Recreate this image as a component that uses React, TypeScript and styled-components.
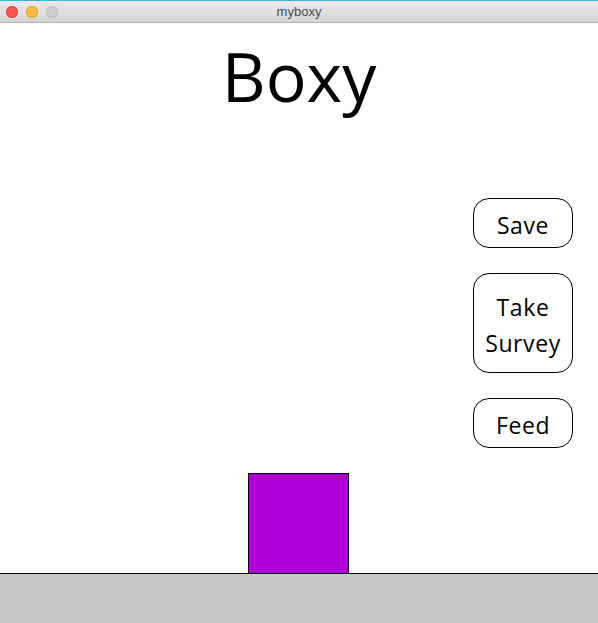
import React from 'react'
import styled, { createGlobalStyle } from 'styled-components'

const GlobalStyle = createGlobalStyle`
	html, body, #root {
		margin: 0;
		padding: 0;
		height: 100%;
	}
	body {
		font-family: 'Open Sans', 'Noto Sans', sans-serif;
		background: #ffffff;
	}
`

const buttons = ['Save', 'Take Survey', 'Feed']

export default function App() {
	return (
		<>
			<GlobalStyle />
			<Window>
				<TitleBar>
					<Lights>
						<Light color="#fc5753" edge="#df4744" />
						<Light color="#fdbc40" edge="#de9f34" />
						<Light color="#d0d0d0" edge="#bdbdbd" />
					</Lights>
					<WindowTitle>myboxy</WindowTitle>
				</TitleBar>
				<Stage>
					<Heading>Boxy</Heading>
					<Menu>
						{buttons.map(label => (
							<MenuButton key={label} tall={label === 'Take Survey'}>
								{label}
							</MenuButton>
						))}
					</Menu>
					<Pet />
				</Stage>
				<Ground />
			</Window>
		</>
	)
}

const Window = styled.div`
	height: 623px;
	display: flex;
	flex-direction: column;
	overflow: hidden;
`

const TitleBar = styled.div`
	height: 23px;
	flex-shrink: 0;
	position: relative;
	display: flex;
	align-items: center;
	justify-content: center;
	background: linear-gradient(#ebebeb, #d5d5d5);
	border-top: 1px solid #3fb0d0;
	border-bottom: 1px solid #b4b4b4;
	box-sizing: border-box;
`

const Lights = styled.div`
	position: absolute;
	left: 6px;
	top: 5px;
	display: flex;
	gap: 8px;
`

const Light = styled.span<{ color: string; edge: string }>`
	width: 12px;
	height: 12px;
	border-radius: 50%;
	background: ${p => p.color};
	box-shadow: inset 0 0 0 1px ${p => p.edge};
`

const WindowTitle = styled.div`
	font-family: 'Liberation Sans', Arial, sans-serif;
	font-size: 13px;
	color: #4a4a4a;
`

const Stage = styled.div`
	flex: 1;
	display: flex;
	flex-direction: column;
`

const Heading = styled.h1`
	margin: 5px 0 0;
	font-weight: 400;
	font-size: 68px;
	line-height: 96px;
	text-align: center;
	color: #000;
`

const Menu = styled.div`
	align-self: flex-end;
	margin: 74px 25px 0 0;
	display: flex;
	flex-direction: column;
	gap: 25px;
`

const MenuButton = styled.div<{ tall?: boolean }>`
	width: 100px;
	height: ${p => (p.tall ? 100 : 50)}px;
	box-sizing: border-box;
	border: 1px solid #000;
	border-radius: 16px;
	display: flex;
	align-items: center;
	justify-content: center;
	text-align: center;
	font-size: 23px;
	line-height: 36px;
	letter-spacing: 0.6px;
	color: #000;
	padding: 4px 2px 0;
`

const Pet = styled.div`
	align-self: center;
	margin-top: auto;
	width: 101px;
	height: 100px;
	box-sizing: border-box;
	border: 1px solid #000;
	border-bottom: none;
	background: #ad00d6;
	margin-left: -2px;
`

const Ground = styled.div`
	height: 50px;
	flex-shrink: 0;
	box-sizing: border-box;
	border-top: 1px solid #000;
	background: #c8c8c8;
`
